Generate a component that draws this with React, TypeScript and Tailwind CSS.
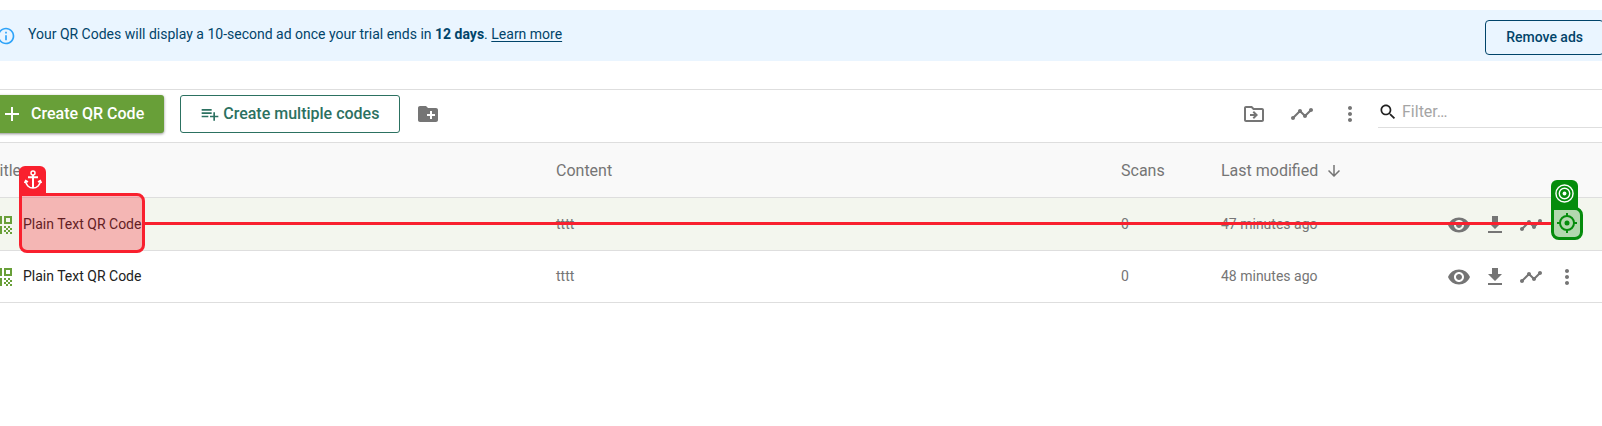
import React from "react";

const paths = {
  info: "M11 7h2v2h-2zm0 4h2v6h-2zm1-9C6.48 2 2 6.48 2 12s4.48 10 10 10 10-4.48 10-10S17.52 2 12 2zm0 18c-4.41 0-8-3.59-8-8s3.59-8 8-8 8 3.59 8 8-3.59 8-8 8z",
  add: "M19 13h-6v6h-2v-6H5v-2h6V5h2v6h6v2z",
  playlist:
    "M14 10H2v2h12v-2zm0-4H2v2h12V6zm4 8v-4h-2v4h-4v2h4v4h2v-4h4v-2h-4zM2 16h8v-2H2v2z",
  newFolder:
    "M20 6h-8l-2-2H4c-1.11 0-1.99.89-1.99 2L2 18c0 1.11.89 2 2 2h16c1.11 0 2-.89 2-2V8c0-1.11-.89-2-2-2zm-1 8h-3v3h-2v-3h-3v-2h3V9h2v3h3v2z",
  moveFolder:
    "M20 6h-8l-2-2H4c-1.1 0-1.99.9-1.99 2L2 18c0 1.1.9 2 2 2h16c1.1 0 2-.9 2-2V8c0-1.1-.9-2-2-2zm0 12H4V6h5.17l1.41 1.41.59.59H20v10zm-7.84-6H8v2h4.16l-1.59 1.59L11.99 17 16 13.01 11.99 9l-1.41 1.41L12.16 12z",
  timeline:
    "M23 8c0 1.1-.9 2-2 2-.18 0-.35-.02-.51-.07l-3.56 3.55c.05.16.07.34.07.52 0 1.1-.9 2-2 2s-2-.9-2-2c0-.18.02-.36.07-.52l-2.55-2.55c-.16.05-.34.07-.52.07s-.36-.02-.52-.07l-4.55 4.56c.05.16.07.33.07.51 0 1.1-.9 2-2 2s-2-.9-2-2 .9-2 2-2c.18 0 .35.02.51.07l4.56-4.55C8.02 9.36 8 9.18 8 9c0-1.1.9-2 2-2s2 .9 2 2c0 .18-.02.36-.07.52l2.55 2.55c.16-.05.34-.07.52-.07s.36.02.52.07l3.55-3.56C19.02 8.35 19 8.18 19 8c0-1.1.9-2 2-2s2 .9 2 2z",
  more: "M12 8c1.1 0 2-.9 2-2s-.9-2-2-2-2 .9-2 2 .9 2 2 2zm0 2c-1.1 0-2 .9-2 2s.9 2 2 2 2-.9 2-2-.9-2-2-2zm0 6c-1.1 0-2 .9-2 2s.9 2 2 2 2-.9 2-2-.9-2-2-2z",
  search:
    "M15.5 14h-.79l-.28-.27C15.41 12.59 16 11.11 16 9.5 16 5.91 13.09 3 9.5 3S3 5.91 3 9.5 5.91 16 9.5 16c1.61 0 3.09-.59 4.23-1.57l.27.28v.79l5 4.99L20.49 19l-4.99-5zm-6 0C7.01 14 5 11.99 5 9.5S7.01 5 9.5 5 14 7.01 14 9.5 11.99 14 9.5 14z",
  down: "M20 12l-1.41-1.41L13 16.17V4h-2v12.17l-5.58-5.59L4 12l8 8 8-8z",
  eye: "M12 4.5C7 4.5 2.73 7.61 1 12c1.73 4.39 6 7.5 11 7.5s9.27-3.11 11-7.5c-1.73-4.39-6-7.5-11-7.5zM12 17c-2.76 0-5-2.24-5-5s2.24-5 5-5 5 2.24 5 5-2.24 5-5 5zm0-8c-1.66 0-3 1.34-3 3s1.34 3 3 3 3-1.34 3-3-1.34-3-3-3z",
  download: "M19 9h-4V3H9v6H5l7 7 7-7zM5 18v2h14v-2H5z",
  qr: "M3 11h8V3H3v8zm2-6h4v4H5V5zM3 21h8v-8H3v8zm2-6h4v4H5v-4zM13 3v8h8V3h-8zm6 6h-4V5h4v4zM19 19h2v2h-2zM13 13h2v2h-2zM15 15h2v2h-2zM13 17h2v2h-2zM15 19h2v2h-2zM17 17h2v2h-2zM17 13h2v2h-2zM19 15h2v2h-2z",
};

function Icon({ name, className = "size-6" }: { name: keyof typeof paths; className?: string }) {
  return (
    <svg viewBox="0 0 24 24" fill="currentColor" aria-hidden="true" className={`block shrink-0 ${className}`}>
      <path d={paths[name]} />
    </svg>
  );
}

function IconButton({ name, label }: { name: keyof typeof paths; label: string }) {
  return (
    <button type="button" aria-label={label} className="text-[#757575]">
      <Icon name={name} />
    </button>
  );
}

function SourceMarker() {
  return (
    <span className="pointer-events-none absolute -inset-x-1 -top-[6px] -bottom-1 z-10 rounded-lg rounded-tl-none border-3 border-[#f9202e] bg-[#f9202e]/30">
      <span className="absolute -top-[30px] -left-[3px] flex h-[30px] w-[27px] justify-center rounded-t-md bg-[#f9202e] pt-1">
        <svg viewBox="0 0 18 20" className="h-5 w-[18px]" fill="none" stroke="white" strokeWidth="1.5" aria-hidden="true">
          <circle cx="9" cy="3" r="2" />
          <path d="M9 5v13M4 7.2h10" strokeWidth="2" />
          <path d="M1.5 10.5c.3 4.5 3.5 7.5 7.5 7.5s7.2-3 7.5-7.5M.5 13l1.2-2.5L4 12M17.5 13l-1.2-2.5L14 12" />
        </svg>
      </span>
    </span>
  );
}

function TargetMarker() {
  return (
    <span className="pointer-events-none absolute -top-[6px] -left-1 z-10 flex h-[33px] w-8 items-center justify-center rounded-lg rounded-tl-none border-3 border-[#058c0c] bg-[#b2d8ae]">
      <span className="absolute -top-[30px] -left-[3px] flex h-[30px] w-[27px] justify-center rounded-t-md bg-[#058c0c] pt-1">
        <svg viewBox="0 0 20 20" className="size-[19px]" fill="none" stroke="white" strokeWidth="1.5" aria-hidden="true">
          <circle cx="10" cy="10" r="9" />
          <circle cx="10" cy="10" r="5.5" />
          <circle cx="10" cy="10" r="2" fill="white" stroke="none" />
        </svg>
      </span>
      <svg viewBox="0 0 20 20" className="size-5" fill="none" stroke="#058c0c" strokeWidth="2" aria-hidden="true">
        <circle cx="10" cy="10" r="7" />
        <path d="M10 0v4M10 16v4M0 10h4M16 10h4" />
        <circle cx="10" cy="10" r="2.5" fill="#058c0c" stroke="none" />
      </svg>
    </span>
  );
}

const rows = [
  { title: "Plain Text QR Code", content: "tttt", scans: 0, modified: "47 minutes ago", active: true },
  { title: "Plain Text QR Code", content: "tttt", scans: 0, modified: "48 minutes ago", active: false },
];

export default function App() {
  return (
    <div className="overflow-x-hidden bg-white font-['Roboto',sans-serif] text-[#757575]">
      <div className="-mx-6 pt-[10px]">
        <section className="flex h-[51px] items-center bg-[#eaf5ff] pr-[22px] pl-5 text-sm text-[#01446a]">
          <Icon name="info" className="size-5 text-[#2ea3f9]" />
          <p className="ml-3 flex-1 pb-[3px]">
            Your QR Codes will display a 10-second ad once your trial ends in <b>12 days</b>.{" "}
            <a href="#learn" className="underline underline-offset-2">Learn more</a>
          </p>
          <button type="button" className="mt-[3px] h-[35px] rounded border border-[#01446a] px-5 font-medium">
            Remove ads
          </button>
        </section>

        <div className="mt-7 flex h-[54px] items-center border-y border-[#dedede] pb-1 pl-4">
          <button
            type="button"
            className="flex h-[38px] items-center rounded-[3px] bg-[#689f38] pr-5 pl-2 font-medium text-white shadow-[0_1px_3px_rgba(0,0,0,0.45)]"
          >
            <Icon name="add" />
            <span className="ml-[7px]">Create QR Code</span>
          </button>
          <button
            type="button"
            className="ml-4 flex h-[38px] items-center rounded-[3px] border border-[#2c7161] pr-5 pl-[19px] font-medium text-[#2c7161]"
          >
            <Icon name="playlist" className="size-5" />
            <span className="ml-[3px]">Create multiple codes</span>
          </button>
          <span className="ml-4 flex">
            <IconButton name="newFolder" label="New folder" />
          </span>
          <div className="ml-auto flex items-center gap-6">
            <IconButton name="moveFolder" label="Move to folder" />
            <IconButton name="timeline" label="Statistics" />
            <IconButton name="more" label="More" />
          </div>
          <label className="mb-1 ml-4 flex h-8 w-[248px] items-center border-b border-[#dedede]">
            <Icon name="search" className="size-5 text-[#212121]" />
            <input
              type="text"
              aria-label="Filter"
              placeholder="Filter…"
              className="ml-1 w-full min-w-0 bg-transparent text-base outline-none placeholder:text-[#a5a5a5]"
            />
          </label>
        </div>

        <table className="w-full table-fixed border-collapse text-left">
          <colgroup>
            <col className="w-[580px]" />
            <col />
            <col className="w-[100px]" />
            <col className="w-[226px]" />
            <col className="w-[179px]" />
          </colgroup>
          <thead className="bg-[#f9f9f9]">
            <tr className="h-[54px] border-b border-[#dedede]">
              <th scope="col" className="pt-[3px] pl-[14px] font-normal">Title</th>
              <th scope="col" className="pt-[3px] font-normal">Content</th>
              <th scope="col" className="pt-[3px] font-normal">Scans</th>
              <th scope="col" className="pt-[3px] font-normal">
                <span className="flex items-center gap-[7px]">
                  Last modified
                  <Icon name="down" className="size-[18px]" />
                </span>
              </th>
              <th scope="col" aria-label="Actions" />
            </tr>
          </thead>
          <tbody className="text-sm">
            {rows.map((row) => (
              <tr
                key={row.modified}
                className={row.active ? "h-[53px] border-b border-[#dedede] bg-[#f3f6ee]" : "h-[52px] border-b border-[#dedede]"}
              >
                <td className="py-0 pl-[15px]">
                  <div className="flex items-center">
                    <span className="pt-[2px]">
                      <Icon name="qr" className="size-6 text-[#689f38]" />
                    </span>
                    <span className="relative ml-2 flex h-[50px] items-center text-[#212121]">
                      {row.title}
                      {row.active && <SourceMarker />}
                      {row.active && (
                        <span className="pointer-events-none absolute top-[23px] left-[122px] z-10 h-[3px] w-[calc(100vw-196px)] bg-[#f9202e]" />
                      )}
                    </span>
                  </div>
                </td>
                <td>{row.content}</td>
                <td>{row.scans}</td>
                <td>{row.modified}</td>
                <td>
                  <div className="flex gap-3 pt-[2px]">
                    <IconButton name="eye" label="View" />
                    <IconButton name="download" label="Download" />
                    <IconButton name="timeline" label="Statistics" />
                    <span className="relative flex">
                      <IconButton name="more" label="More" />
                      {row.active && <TargetMarker />}
                    </span>
                  </div>
                </td>
              </tr>
            ))}
          </tbody>
        </table>
      </div>
    </div>
  );
}
